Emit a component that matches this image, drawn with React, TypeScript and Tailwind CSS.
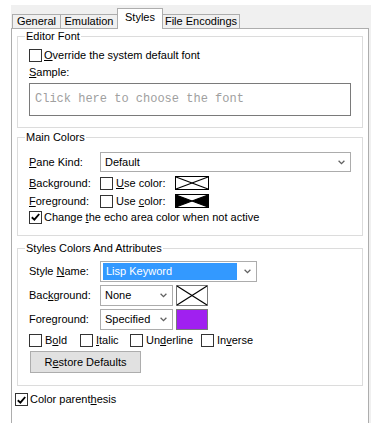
import React from 'react';

const Mn: React.FC<{ c: string }> = ({ c }) => <span className="underline underline-offset-[1px]">{c}</span>;

const Check: React.FC<{ checked?: boolean }> = ({ checked }) => (
  <span className="w-[13px] h-[13px] border border-[#333333] bg-white flex items-center justify-center shrink-0">
    {checked && (
      <svg width="9" height="8" viewBox="0 0 9 8">
        <path d="M0.8 4.2 L3.4 6.6 L8.2 1" stroke="#000" strokeWidth="1.9" fill="none" />
      </svg>
    )}
  </span>
);

const Chevron: React.FC = () => (
  <svg width="7" height="5" viewBox="0 0 7 5" className="shrink-0">
    <polyline points="0.6,0.8 3.5,3.6 6.4,0.8" stroke="#606060" strokeWidth="1.3" fill="none" />
  </svg>
);

// Color box with a cross, used for "no color"
const Swatch: React.FC<{ w: number; h: number; dark?: boolean; border?: string }> = ({ w, h, dark, border = '#000' }) => (
  <svg width={w} height={h} viewBox={`0 0 ${w} ${h}`} className="shrink-0">
    <rect x="0.5" y="0.5" width={w - 1} height={h - 1} fill="#fff" stroke={border} />
    {dark && (
      <>
        <polygon points={`1,1 ${w / 2},${h / 2} 1,${h - 1}`} fill="#000" />
        <polygon points={`${w - 1},1 ${w / 2},${h / 2} ${w - 1},${h - 1}`} fill="#000" />
      </>
    )}
    <line x1="1" y1="1" x2={w - 1} y2={h - 1} stroke="#000" strokeWidth="1.2" />
    <line x1="1" y1={h - 1} x2={w - 1} y2="1" stroke="#000" strokeWidth="1.2" />
  </svg>
);

const Group: React.FC<{ title: string; className?: string; children: React.ReactNode }> = ({ title, className, children }) => (
  <div className={'relative mx-[5px] border border-[#dcdcdc] pl-[11px] ' + (className ?? '')}>
    <span className="absolute left-[7px] top-[-8px] bg-white px-[1px] leading-[14px]">{title}</span>
    {children}
  </div>
);

const Tab: React.FC<{ label: string; w: string; selected?: boolean }> = ({ label, w, selected }) =>
  selected ? (
    <div className={`${w} h-[21px] -mb-[1px] -ml-[1px] relative z-10 bg-white border border-b-0 border-[#adadad] flex justify-center pt-[1px] leading-[14px]`}>
      {label}
    </div>
  ) : (
    <div className={`${w} h-[14px] -ml-[1px] first:ml-0 bg-[#f0f0f0] border border-b-0 border-[#adadad] flex justify-center leading-[13px]`}>
      {label}
    </div>
  );

export default function App() {
  return (
    <div className="w-[379px] h-[423px] bg-white overflow-hidden font-['Liberation_Sans',Arial,sans-serif] text-[11px] leading-[13px] text-black">
      <div className="ml-[11px] mt-[5px] w-[360px] h-[418px] bg-[#f0f0f0] flex flex-col">
        {/* Tab strip */}
        <div className="h-[23px] flex items-end pl-[1px]">
          <Tab label="General" w="w-[49px]" />
          <Tab label="Emulation" w="w-[58px]" />
          <Tab label="Styles" w="w-[46px]" selected />
          <Tab label="File Encodings" w="w-[78px]" />
        </div>

        {/* Tab pane */}
        <div className="flex-1 w-[358px] bg-white border border-b-0 border-[#adadad] flex flex-col">
          <Group title="Editor Font" className="mt-[7px] pt-[12px] pb-[11px]">
            <div className="h-[13px] flex items-center">
              <Check />
              <span className="ml-[2px]"><Mn c="O" />verride the system default font</span>
            </div>
            <div className="h-[13px] mt-[4px]">
              <Mn c="S" />ample:
            </div>
            <div className="mt-[4px] w-[322px] h-[33px] border border-[#7a7a7a] flex items-center pl-[5px] font-['Liberation_Mono',monospace] text-[12px] text-[#a0a0a0]">
              Click here to choose the font
            </div>
          </Group>

          <Group title="Main Colors" className="mt-[9px] pt-[14px] pb-[11px]">
            <div className="h-[20px] flex items-center">
              <span className="w-[71px]"><Mn c="P" />ane Kind:</span>
              <div className="w-[251px] h-[20px] border border-[#acacac] flex items-center justify-between pl-[4px] pr-[5px]">
                <span>Default</span>
                <Chevron />
              </div>
            </div>
            <div className="h-[14px] mt-[4px] flex items-center">
              <span className="w-[71px]"><Mn c="B" />ackground:</span>
              <div className="w-[75px] flex items-center">
                <Check />
                <span className="ml-[3px]"><Mn c="U" />se color:</span>
              </div>
              <Swatch w={34} h={14} />
            </div>
            <div className="h-[14px] mt-[4px] flex items-center">
              <span className="w-[71px]"><Mn c="F" />oreground:</span>
              <div className="w-[75px] flex items-center">
                <Check />
                <span className="ml-[3px]">Use <Mn c="c" />olor:</span>
              </div>
              <Swatch w={34} h={14} dark />
            </div>
            <div className="h-[14px] mt-[2px] flex items-center">
              <Check checked />
              <span className="ml-[2px]">Change <Mn c="t" />he echo area color when not active</span>
            </div>
          </Group>

          <Group title="Styles Colors And Attributes" className="mt-[12px] pt-[12px] pb-[12px]">
            <div className="h-[21px] flex items-center">
              <span className="w-[71px]">Style <Mn c="N" />ame:</span>
              <div className="w-[157px] h-[21px] border border-[#acacac] flex items-center pl-[2px] pr-[5px]">
                <div className="w-[134px] h-[17px] bg-[#3399ff] text-white flex items-center pl-[3px]">Lisp Keyword</div>
                <div className="flex-1 flex justify-end">
                  <Chevron />
                </div>
              </div>
            </div>
            <div className="h-[21px] mt-[3px] flex items-center">
              <span className="w-[71px]">Bac<Mn c="k" />ground:</span>
              <div className="w-[73px] h-[21px] border border-[#acacac] flex items-center justify-between pl-[4px] pr-[5px]">
                <span>None</span>
                <Chevron />
              </div>
              <span className="ml-[3px] flex">
                <Swatch w={32} h={21} border="#7a7a7a" />
              </span>
            </div>
            <div className="h-[21px] mt-[3px] flex items-center">
              <span className="w-[71px]">Foreground:</span>
              <div className="w-[73px] h-[21px] border border-[#acacac] flex items-center justify-between pl-[4px] pr-[5px]">
                <span>Specified</span>
                <Chevron />
              </div>
              <div className="ml-[3px] w-[32px] h-[21px] bg-[#a020f0] border border-[#7a7a7a]" />
            </div>
            <div className="h-[13px] mt-[4px] flex items-center">
              <div className="w-[51px] flex items-center">
                <Check />
                <span className="ml-[3px]">B<Mn c="o" />ld</span>
              </div>
              <div className="w-[50px] flex items-center">
                <Check />
                <span className="ml-[3px]"><Mn c="I" />talic</span>
              </div>
              <div className="w-[71px] flex items-center">
                <Check />
                <span className="ml-[3px]">Un<Mn c="d" />erline</span>
              </div>
              <div className="flex items-center">
                <Check />
                <span className="ml-[3px]">In<Mn c="v" />erse</span>
              </div>
            </div>
            <button className="mt-[4px] ml-[1px] w-[111px] h-[22px] bg-[#e1e1e1] border border-[#adadad] flex items-center justify-center">
              <span>R<Mn c="e" />store Defaults</span>
            </button>
          </Group>

          <div className="h-[13px] mt-[7px] pl-[3px] flex items-center">
            <Check checked />
            <span className="ml-[2px]">Color parent<Mn c="h" />esis</span>
          </div>
        </div>
      </div>
    </div>
  );
}
